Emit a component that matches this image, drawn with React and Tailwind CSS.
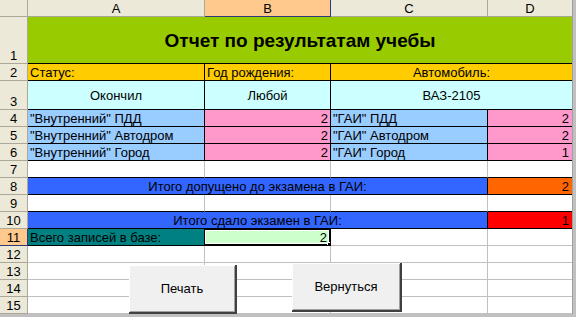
const base = 'flex overflow-hidden whitespace-nowrap leading-[15px]';

const hdr = 'bg-[#ece9d8] border-r border-b border-[#aca899] justify-center items-end';
const hdrEnd = 'bg-[#ece9d8] border-b border-[#aca899] justify-center items-end';
const hdrSel = 'bg-[#ffc88c] border-r border-b border-[#2b3b7a] justify-center items-end';
const grid = 'border-r border-b border-[#c0c0c0]';
const gridEnd = 'border-b border-[#c0c0c0]';
const gapRow = 'border-r border-r-[#c0c0c0] border-b border-b-black';
const gapRowEnd = 'border-b border-b-black';

const rows = [
  // column header
  [
    { cls: hdr },
    { cls: hdr, text: 'A' },
    { cls: hdrSel, text: 'B' },
    { cls: hdr, text: 'C' },
    { cls: hdrEnd, text: 'D' },
  ],
  [
    { cls: hdr, text: '1' },
    {
      span: 'col-span-4',
      cls: 'bg-[#99cc00] border-b border-black justify-center items-center text-[19px] font-bold',
      text: 'Отчет по результатам учебы',
    },
  ],
  [
    { cls: hdr, text: '2' },
    { cls: 'bg-[#ffcc00] border-r border-b border-black items-end pl-[2px]', text: 'Статус:' },
    { cls: 'bg-[#ffcc00] border-r border-b border-black items-end pl-[2px]', text: 'Год рождения:' },
    { span: 'col-span-2', cls: 'bg-[#ffcc00] border-b border-black items-end justify-center', text: 'Автомобиль:' },
  ],
  [
    { cls: hdr, text: '3' },
    { cls: 'bg-[#ccffff] border-r border-b border-black items-center justify-center', text: 'Окончил' },
    { cls: 'bg-[#ccffff] border-r border-b border-black items-center justify-center', text: 'Любой' },
    { span: 'col-span-2', cls: 'bg-[#ccffff] border-b border-black items-center justify-center', text: 'ВАЗ-2105' },
  ],
  [
    { cls: hdr, text: '4' },
    { cls: 'bg-[#99ccff] border-r border-b border-black items-end pl-[2px]', text: '"Внутренний" ПДД' },
    { cls: 'bg-[#ff99cc] border-r border-b border-black items-end justify-end pr-[2px]', text: '2' },
    { cls: 'bg-[#99ccff] border-r border-b border-black items-end pl-[2px]', text: '"ГАИ" ПДД' },
    { cls: 'bg-[#ff99cc] border-b border-black items-end justify-end pr-[3px]', text: '2' },
  ],
  [
    { cls: hdr, text: '5' },
    { cls: 'bg-[#99ccff] border-r border-b border-black items-end pl-[2px]', text: '"Внутренний" Автодром' },
    { cls: 'bg-[#ff99cc] border-r border-b border-black items-end justify-end pr-[2px]', text: '2' },
    { cls: 'bg-[#99ccff] border-r border-b border-black items-end pl-[2px]', text: '"ГАИ" Автодром' },
    { cls: 'bg-[#ff99cc] border-b border-black items-end justify-end pr-[3px]', text: '2' },
  ],
  [
    { cls: hdr, text: '6' },
    { cls: 'bg-[#99ccff] border-r border-b border-black items-end pl-[2px]', text: '"Внутренний" Город' },
    { cls: 'bg-[#ff99cc] border-r border-b border-black items-end justify-end pr-[2px]', text: '2' },
    { cls: 'bg-[#99ccff] border-r border-b border-black items-end pl-[2px]', text: '"ГАИ" Город' },
    { cls: 'bg-[#ff99cc] border-b border-black items-end justify-end pr-[3px]', text: '1' },
  ],
  [
    { cls: hdr, text: '7' },
    { cls: gapRow },
    { cls: gapRow },
    { cls: gapRow },
    { cls: gapRowEnd },
  ],
  [
    { cls: hdr, text: '8' },
    {
      span: 'col-span-3',
      cls: 'bg-[#3366ff] border-r border-b border-black items-end justify-center',
      text: 'Итого допущено до экзамена в ГАИ:',
    },
    { cls: 'bg-[#ff6600] border-b border-black items-end justify-end pr-[3px]', text: '2' },
  ],
  [
    { cls: hdr, text: '9' },
    { cls: gapRow },
    { cls: gapRow },
    { cls: gapRow },
    { cls: gapRowEnd },
  ],
  [
    { cls: hdr, text: '10' },
    {
      span: 'col-span-3',
      cls: 'bg-[#3366ff] border-r border-b border-black items-end justify-center',
      text: 'Итого сдало экзамен в ГАИ:',
    },
    { cls: 'bg-[#ff0000] border-b border-black items-end justify-end pr-[3px]', text: '1' },
  ],
  [
    { cls: 'bg-[#ffc88c] border-r border-b border-[#2b3b7a] justify-center items-end', text: '11' },
    { cls: 'bg-[#008080] border-r border-b border-black items-end pl-[2px]', text: 'Всего записей в базе:' },
    { cls: 'bg-[#ccffcc] border-r border-b border-black items-end justify-end pr-[3px] relative', text: '2', selected: true },
    { cls: grid },
    { cls: gridEnd },
  ],
];

for (let n = 12; n <= 15; n++) {
  rows.push([
    { cls: hdr, text: String(n) },
    { cls: grid },
    { cls: grid },
    { cls: grid },
    { cls: gridEnd },
  ]);
}

function Button({ className, children }) {
  return (
    <div
      className={`absolute flex items-center justify-center bg-[#f0f0f0] border-r-2 border-b-2 border-[#404040] shadow-[inset_1px_1px_0_#ffffff,inset_-1px_-1px_0_#a0a0a0] text-[13px] ${className}`}
    >
      {children}
    </div>
  );
}

export default function App() {
  return (
    <div className="relative w-[576px] h-[317px] overflow-hidden bg-white text-[13px] text-black font-['Liberation_Sans',Arial,sans-serif]">
      <div className="flex h-[314px]">
        <div className="grid w-[572px] grid-cols-[28px_177px_126px_157px_84px] grid-rows-[17px_47px_17px_29px_repeat(12,17px)]">
          {rows.map((row, r) =>
            row.map((cell, c) => (
              <div key={`${r}-${c}`} className={`${base} ${cell.span || ''} ${cell.cls}`}>
                {cell.text}
                {cell.selected && (
                  <div className="absolute -left-[2px] -top-[1px] w-[128px] h-[18px] border-2 border-black">
                    <div className="h-full w-full border border-white" />
                    <div className="absolute -right-[4px] -bottom-[4px] w-[6px] h-[6px] bg-black border border-white" />
                  </div>
                )}
              </div>
            ))
          )}
        </div>
        <div className="w-[4px] bg-[#c0c0c0] border-l border-[#a0a0a0]" />
      </div>
      <div className="h-[3px] bg-[#c0c0c0]" />

      {/* form buttons float over the sheet */}
      <Button className="left-[129px] top-[265px] w-[108px] h-[49px]">Печать</Button>
      <Button className="left-[292px] top-[263px] w-[110px] h-[49px]">Вернуться</Button>
    </div>
  );
}
